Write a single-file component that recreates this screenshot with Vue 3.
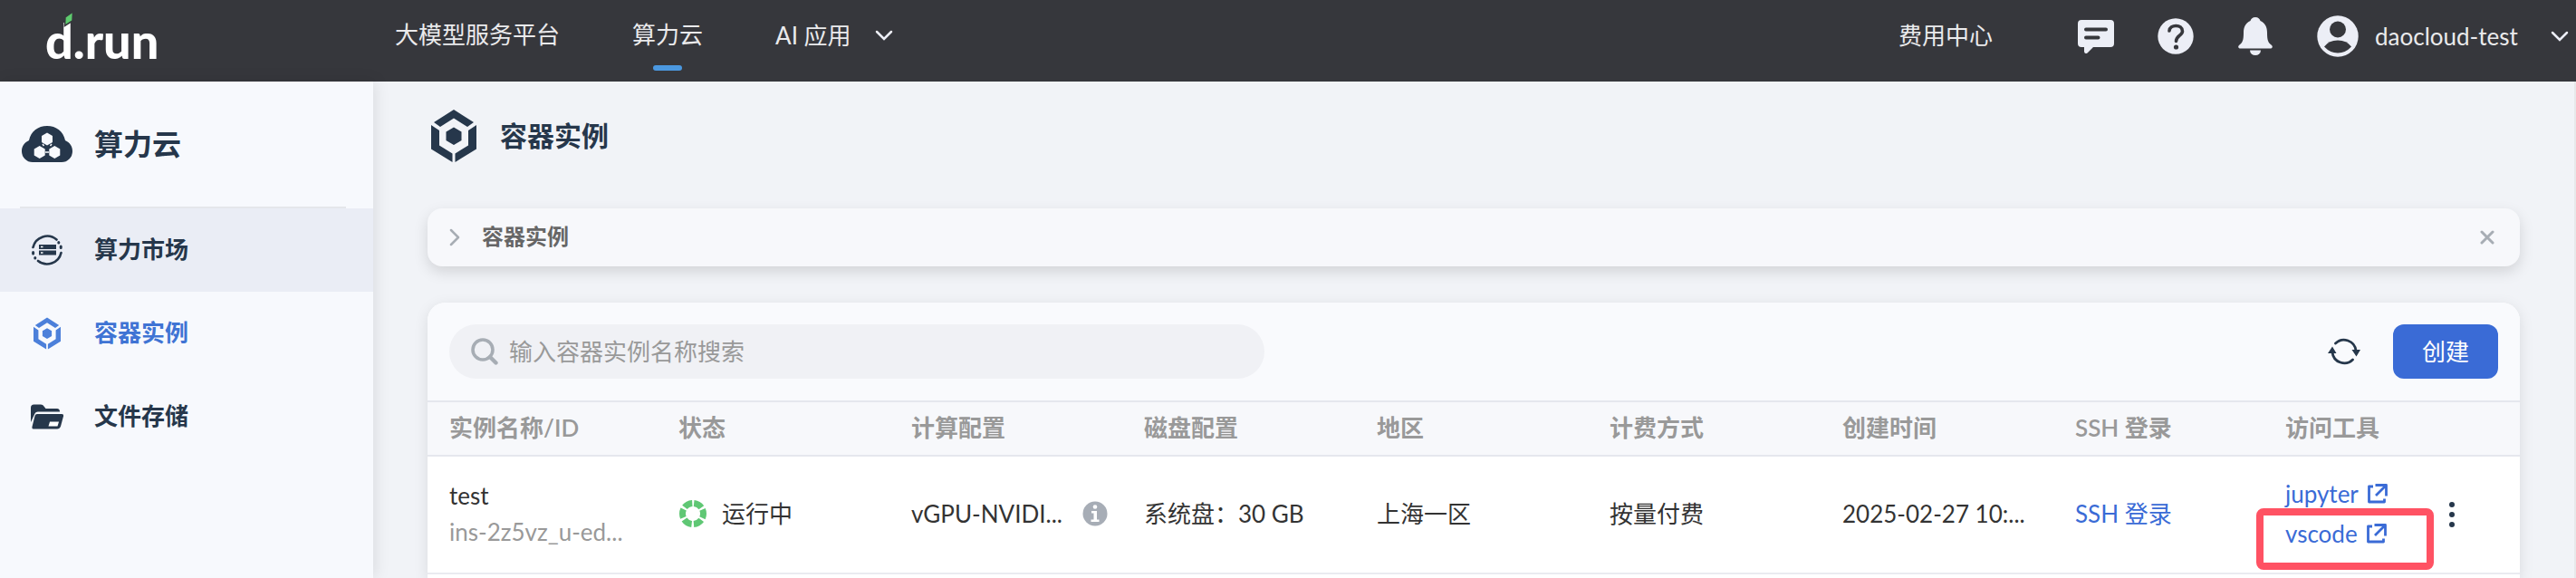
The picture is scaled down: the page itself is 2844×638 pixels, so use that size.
<script setup>
import { ref } from 'vue'

const search = ref('')

const menu = [
  { label: '算力市场', icon: 'market', state: 'hovered' },
  { label: '容器实例', icon: 'container', state: 'active' },
  { label: '文件存储', icon: 'folder', state: '' },
]

const columns = ['实例名称/ID', '状态', '计算配置', '磁盘配置', '地区', '计费方式', '创建时间', 'SSH 登录', '访问工具']

const instances = [
  {
    name: 'test',
    id: 'ins-2z5vz_u-ed...',
    status: '运行中',
    compute: 'vGPU-NVIDI...',
    disk: '系统盘：30 GB',
    region: '上海一区',
    billing: '按量付费',
    created: '2025-02-27 10:...',
  },
]
</script>

<template>
  <div class="app">
    <header class="topbar">
      <a href="#" class="logo" aria-label="d.run">
        <span>d.run</span>
        <svg class="leaf" viewBox="0 0 12 18"><path d="M2 7 L10.500 1 L10 11 L1.500 16.500Z" fill="#5ecb6e" stroke="#36373c" stroke-width="1.500" /></svg>
      </a>
      <nav class="topnav">
        <a href="#">大模型服务平台</a>
        <a href="#" class="current">算力云</a>
        <a href="#" class="with-arrow">AI 应用
          <svg class="chevron" viewBox="0 0 20 12"><path d="M2 2 L10 10 L18 2" /></svg>
        </a>
      </nav>
      <div class="tools">
        <a href="#" class="billing">费用中心</a>
        <button type="button" class="icon-btn" aria-label="消息">
          <svg viewBox="0 0 40 40">
            <path d="M4 2H36a4 4 0 0 1 4 4V28a4 4 0 0 1-4 4H17L10.500 38.500Q7.500 40 7 37V32H4a4 4 0 0 1-4-4V6a4 4 0 0 1 4-4Z" fill="#eceef6" />
            <path d="M9 12.500H31M9 21.500H22.500" stroke="#36373c" stroke-width="4" stroke-linecap="round" />
          </svg>
        </button>
        <button type="button" class="icon-btn" aria-label="帮助">
          <svg viewBox="0 0 40 40">
            <circle cx="20" cy="20" r="19.700" fill="#eceef6" />
            <path d="M13 14C13.500 6.500 27.500 6.500 27.500 14.500C27.500 19 20.500 19.500 20.500 25.500" fill="none" stroke="#36373c" stroke-width="3.600" stroke-linecap="round" />
            <circle cx="20.500" cy="32" r="2.600" fill="#36373c" />
          </svg>
        </button>
        <button type="button" class="icon-btn" aria-label="通知">
          <svg viewBox="0 0 40 42">
            <path d="M20 0C23 0 25 2 25.500 4C31 6.500 33 11 33 17C33 25 34 28 37.500 30.500C40 32.500 38.500 34.500 36.500 34.500H3.500C1.500 34.500 0 32.500 2.500 30.500C6 28 7 25 7 17C7 11 9 6.500 14.500 4C15 2 17 0 20 0Z" fill="#eceef6" />
            <path d="M14 36.500H26A6 5.500 0 0 1 14 36.500Z" fill="#eceef6" />
          </svg>
        </button>
        <button type="button" class="user">
          <svg class="avatar" viewBox="0 0 46 46">
            <circle cx="23" cy="23" r="22.700" fill="#eceef6" />
            <circle cx="23" cy="15.500" r="9" fill="#36373c" />
            <path d="M8 34.500Q13 27.500 23 27.500T38 34.500Q31.500 41.500 23 41.500T8 34.500Z" fill="#36373c" />
          </svg>
          <span>daocloud-test</span>
          <svg class="chevron" viewBox="0 0 20 12"><path d="M2 2 L10 10 L18 2" /></svg>
        </button>
      </div>
    </header>

    <div class="body">
      <aside class="sidebar">
        <div class="product">
          <svg viewBox="0 0 56 40">
            <path d="M12 40A12 12 0 0 1 0 28C0 22 3 18.500 8 16C10 6 18 0 28 0S46 6 48 16C53 18.500 56 22 56 28A12 12 0 0 1 44 40Z" fill="#26374b" />
            <path d="M28 7.500L34 11V18L28 21.500L22 18V11ZM19.700 22L25.700 25.500V32.500L19.700 36L13.700 32.500V25.500ZM36.300 22L42.300 25.500V32.500L36.300 36L30.300 32.500V25.500Z" fill="#f7f9fd" />
            <path d="M23 20L24.500 22M33 20L31.500 22M26 29H30" stroke="#f7f9fd" stroke-width="1.500" />
          </svg>
          <span>算力云</span>
        </div>
        <nav class="menu">
          <a v-for="item in menu" :key="item.label" href="#" :class="item.state">
            <svg v-if="item.icon === 'market'" viewBox="0 0 36 36">
              <path d="M2.500 15A16 16 0 0 1 28.500 6.500M33.500 21A16 16 0 0 1 8 30" fill="none" stroke="#26374b" stroke-width="2.600" stroke-linecap="round" />
              <path d="M30.800 9.500V10M33.200 14V15.500M2.600 20.500V22M4.800 26.500V27" stroke="#26374b" stroke-width="3" stroke-linecap="round" />
              <path d="M9 12H28V17H9ZM9 18.500H28V23.500H9Z" fill="#26374b" />
              <path d="M11 14.500H13.500M11 21H13.500" stroke="#fff" stroke-width="1.500" />
            </svg>
            <svg v-else-if="item.icon === 'container'" viewBox="-3 -1 56 60">
              <path d="M25 0L47 14L40 19L25 9.500L10 19L3 14ZM0 17L9 23V39.500L23.500 48.500V58L0 43.500ZM50 17L41 23V39.500L26.500 48.500V58L50 43.500ZM25 19.500L33.500 24.500V34L25 39L16.500 34V24.500Z" fill="#4c80da" />
            </svg>
            <svg v-else viewBox="0 0 36 36">
              <path d="M0 8Q0 4.500 3.500 4.500H11Q13.500 4.500 14.500 6.500L16.500 9H29Q32 9 32 12.500H8Q5 12.500 4 15.500L0 24Z" fill="#26374b" />
              <path d="M7 15H34Q36.500 15 36 17.500L33 28.500Q32 31.500 29 31.500H3Q1 31.500 1.500 29L4.500 17Q5 15 7 15Z" fill="#26374b" />
              <path d="M21 23.500H31L29.500 28.500H19.500Z" fill="#fff" />
            </svg>
            <span>{{ item.label }}</span>
          </a>
        </nav>
      </aside>

      <main class="main">
        <h1 class="title">
          <svg viewBox="0 0 50 58">
            <path d="M25 0L47 14L40 19L25 9.500L10 19L3 14ZM0 17L9 23V39.500L23.500 48.500V58L0 43.500ZM50 17L41 23V39.500L26.500 48.500V58L50 43.500ZM25 19.500L33.500 24.500V34L25 39L16.500 34V24.500Z" fill="#26374b" />
          </svg>
          <span>容器实例</span>
        </h1>

        <section class="notice">
          <button type="button" class="expand">
            <svg viewBox="0 0 12 20"><path d="M2 2L10 10L2 18" fill="none" stroke="#a7adb4" stroke-width="2.500" stroke-linecap="round" stroke-linejoin="round" /></svg>
            <span>容器实例</span>
          </button>
          <button type="button" class="close" aria-label="关闭">
            <svg viewBox="0 0 16 16"><path d="M2 2L14 14M14 2L2 14" stroke="#a7adb4" stroke-width="3" stroke-linecap="round" /></svg>
          </button>
        </section>

        <section class="card">
          <div class="toolbar">
            <label class="search">
              <svg viewBox="0 0 30 30">
                <circle cx="13" cy="13" r="11" fill="none" stroke="#a7adb4" stroke-width="3.600" />
                <path d="M21 21L27.500 27.500" stroke="#a7adb4" stroke-width="4.400" stroke-linecap="round" />
              </svg>
              <input v-model="search" type="text" aria-label="搜索" placeholder="输入容器实例名称搜索" />
            </label>
            <button type="button" class="refresh" aria-label="刷新">
              <svg viewBox="0 0 36 30">
                <path d="M8.500 6A13.300 13.300 0 0 1 31 14M27.500 24A13.300 13.300 0 0 1 5 16" fill="none" stroke="#26374b" stroke-width="2.800" stroke-linecap="round" />
                <path d="M26.500 13H36L31.500 20.500ZM0 17H9.500L5 9.500Z" fill="#26374b" />
              </svg>
            </button>
            <button type="button" class="create">创建</button>
          </div>

          <table>
            <colgroup>
              <col class="col-name" />
              <col v-for="n in 6" :key="n" class="col-info" />
              <col class="col-ssh" />
              <col class="col-tools" />
              <col />
            </colgroup>
            <thead>
              <tr>
                <th v-for="column in columns" :key="column" scope="col">{{ column }}</th>
                <td></td>
              </tr>
            </thead>
            <tbody>
              <tr v-for="row in instances" :key="row.id">
                <td>
                  <div class="name">{{ row.name }}</div>
                  <div class="id">{{ row.id }}</div>
                </td>
                <td>
                  <div class="status">
                    <svg viewBox="0 0 32 32"><circle cx="16" cy="16" r="11.500" fill="none" stroke="#5fc774" stroke-width="7" stroke-dasharray="9.640 2.400" stroke-dashoffset="-1.200" transform="rotate(-90 16 16)" /></svg>
                    {{ row.status }}
                  </div>
                </td>
                <td>
                  <div class="compute">
                    <span>{{ row.compute }}</span>
                    <svg viewBox="0 0 28 28">
                      <circle cx="14" cy="14" r="13.500" fill="#a7adb6" />
                      <circle cx="14" cy="6.500" r="2.300" fill="#fff" />
                      <path d="M10 11H16V20.500H18.500V23H9.500V20.500H12.500V13.500H10Z" fill="#fff" />
                    </svg>
                  </div>
                </td>
                <td>{{ row.disk }}</td>
                <td>{{ row.region }}</td>
                <td>{{ row.billing }}</td>
                <td>{{ row.created }}</td>
                <td><a href="#">SSH 登录</a></td>
                <td>
                  <div class="links">
                    <a v-for="tool in ['jupyter', 'vscode']" :key="tool" href="#">
                      {{ tool }}
                      <svg viewBox="0 0 22 22"><path d="M6 3H1.500V20H18.500V16.500M8.500 1.500H20.500V13.500M20 2L9 13" fill="none" stroke="#3a6bd6" stroke-width="2.800" stroke-linejoin="round" /></svg>
                    </a>
                    <span class="highlight"></span>
                  </div>
                </td>
                <td class="actions">
                  <button type="button" class="more" aria-label="更多操作">
                    <svg viewBox="0 0 8 28"><g fill="#26374b"><circle cx="4" cy="3" r="3" /><circle cx="4" cy="14" r="3" /><circle cx="4" cy="25" r="3" /></g></svg>
                  </button>
                </td>
              </tr>
            </tbody>
          </table>
        </section>
      </main>
    </div>
  </div>
</template>

<style>
body {
  margin: 0;
}
</style>

<style scoped>
.app {
  display: flex;
  flex-direction: column;
  min-height: 100vh;
  font-family: Lato, "Noto Sans CJK SC", sans-serif;
  font-size: 26px;
  line-height: 40px;
  color: #333;
  background: #f1f3f7;
}
.app *,
.app {
  box-sizing: border-box;
}
svg {
  display: block;
  flex: none;
}
a {
  color: inherit;
  text-decoration: none;
}
button {
  padding: 0;
  border: 0;
  background: none;
  color: inherit;
  font: inherit;
  line-height: inherit;
  cursor: pointer;
}

.topbar {
  display: flex;
  align-items: center;
  height: 90px;
  padding: 0 8px 0 50px;
  background: #36373c;
  color: #eaeaec;
}
.logo {
  position: relative;
  width: 386px;
  color: #fff;
  font-size: 54px;
  font-weight: 900;
  line-height: 90px;
}
.leaf {
  position: absolute;
  top: 12px;
  left: 20px;
  width: 12px;
  height: 18px;
}
.topnav {
  display: flex;
  gap: 80px;
  height: 78px;
  line-height: 76px;
  align-self: flex-start;
  white-space: nowrap;
}
.current {
  position: relative;
}
.current::after {
  content: "";
  position: absolute;
  bottom: 0;
  left: 50%;
  width: 32px;
  height: 6px;
  margin-left: -16px;
  border-radius: 3px;
  background: #4b98e0;
}
.with-arrow {
  display: flex;
  align-items: center;
  gap: 26px;
}
.chevron {
  width: 20px;
  height: 12px;
  fill: none;
  stroke: #eceef6;
  stroke-width: 2.500;
  stroke-linecap: round;
}
.tools {
  display: flex;
  align-items: center;
  gap: 48px;
  height: 80px;
  align-self: flex-start;
  margin-left: auto;
  white-space: nowrap;
}
.billing {
  margin-right: 46px;
  padding-bottom: 2px;
}
.icon-btn svg {
  width: 40px;
  height: 42px;
}
.user {
  display: flex;
  align-items: center;
}
.user span {
  min-width: 162px;
  text-align: left;
}
.avatar {
  width: 46px;
  height: 46px;
  margin-right: 18px;
}
.user .chevron {
  margin-left: 32px;
}

.body {
  display: flex;
  flex: 1;
}
.sidebar {
  flex: none;
  width: 412px;
  background: #f7f9fd;
  box-shadow: 2px 0 16px rgba(0, 0, 0, 0.1);
  color: #26374b;
  font-weight: 600;
}
.product {
  display: flex;
  align-items: center;
  gap: 24px;
  height: 140px;
  margin: 0 30px 0 22px;
  padding-left: 2px;
  border-bottom: 2px solid #e5e7eb;
  font-size: 32px;
}
.product svg {
  width: 56px;
  height: 40px;
}
.menu a {
  display: flex;
  align-items: center;
  gap: 34px;
  height: 92px;
  padding-left: 34px;
}
.menu svg {
  width: 36px;
  height: 36px;
}
.menu span,
.title span,
.expand span {
  padding-bottom: 2px;
}
.menu .hovered {
  background: #eaedf5;
}
.menu .active {
  color: #3f74d4;
}

.main {
  display: flex;
  flex: 1;
  flex-direction: column;
  min-width: 0;
  padding: 30px 60px 0;
  border-right: 2px solid #e7e8ea;
}
.title {
  display: flex;
  align-items: center;
  gap: 26px;
  height: 60px;
  margin: 0 0 50px;
  padding-left: 4px;
  font-size: 30px;
  font-weight: 600;
  color: #26374b;
}
.title svg {
  width: 50px;
  height: 58px;
}
.notice {
  display: flex;
  align-items: center;
  justify-content: space-between;
  height: 64px;
  margin-bottom: 40px;
  padding: 0 28px 0 24px;
  border-radius: 16px;
  background: #f7f8fb;
  box-shadow: 0 6px 16px rgba(0, 0, 0, 0.13);
}
.expand {
  display: flex;
  align-items: center;
  gap: 24px;
  font-size: 24px;
  font-weight: 600;
  color: #666;
}
.expand svg {
  width: 12px;
  height: 20px;
}
.close svg {
  width: 16px;
  height: 16px;
}
.card {
  flex: 1;
  overflow: hidden;
  border-radius: 20px 20px 0 0;
  background: #fff;
  box-shadow: 0 4px 16px rgba(0, 0, 0, 0.1);
}
.toolbar {
  display: flex;
  align-items: center;
  gap: 36px;
  height: 108px;
  padding: 0 24px;
  background: #f9fafd;
}
.search {
  display: flex;
  align-items: center;
  gap: 12px;
  width: 900px;
  height: 60px;
  margin-right: auto;
  padding: 0 24px;
  border-radius: 30px;
  background: #f0f1f5;
}
.search svg {
  width: 30px;
  height: 30px;
}
.search input {
  flex: 1;
  min-width: 0;
  padding: 0;
  border: 0;
  outline: 0;
  background: none;
  color: #333;
  font: inherit;
}
.search input::placeholder {
  color: #999;
  opacity: 1;
}
.refresh svg {
  width: 36px;
  height: 30px;
}
.create {
  width: 116px;
  height: 60px;
  border-radius: 12px;
  background: #3a6bd6;
  color: #fff;
}

table {
  width: 100%;
  table-layout: fixed;
  border-collapse: collapse;
}
.col-name {
  width: 253px;
}
.col-info {
  width: 257px;
}
.col-ssh {
  width: 232px;
}
.col-tools {
  width: 180px;
}
thead tr {
  height: 60px;
  border-top: 2px solid #e5e7ee;
  border-bottom: 2px solid #e5e7ee;
  background: #f7f8fb;
}
tbody tr {
  height: 130px;
  border-bottom: 2px solid #eaebf0;
}
th,
td {
  padding: 0 0 2px 24px;
  text-align: left;
  white-space: nowrap;
}
th {
  font-weight: 600;
  color: #999;
}
td a {
  color: #3a6bd6;
}
.id {
  color: #999;
}
.status {
  display: flex;
  align-items: center;
  gap: 16px;
}
.status svg {
  width: 32px;
  height: 32px;
}
.compute {
  display: flex;
  align-items: center;
  justify-content: space-between;
  padding-right: 16px;
}
.compute svg {
  width: 28px;
  height: 28px;
}
.links {
  position: relative;
  display: flex;
  flex-direction: column;
  align-items: flex-start;
  gap: 4px;
}
.links a {
  display: flex;
  align-items: center;
  gap: 10px;
}
.links svg {
  width: 22px;
  height: 22px;
}
.highlight {
  position: absolute;
  top: 36px;
  left: -32px;
  width: 196px;
  height: 68px;
  border: 8px solid #ff5263;
  border-radius: 8px;
  pointer-events: none;
}
.actions {
  padding-bottom: 0;
}
.more {
  display: block;
}
.more svg {
  width: 8px;
  height: 28px;
}
</style>
